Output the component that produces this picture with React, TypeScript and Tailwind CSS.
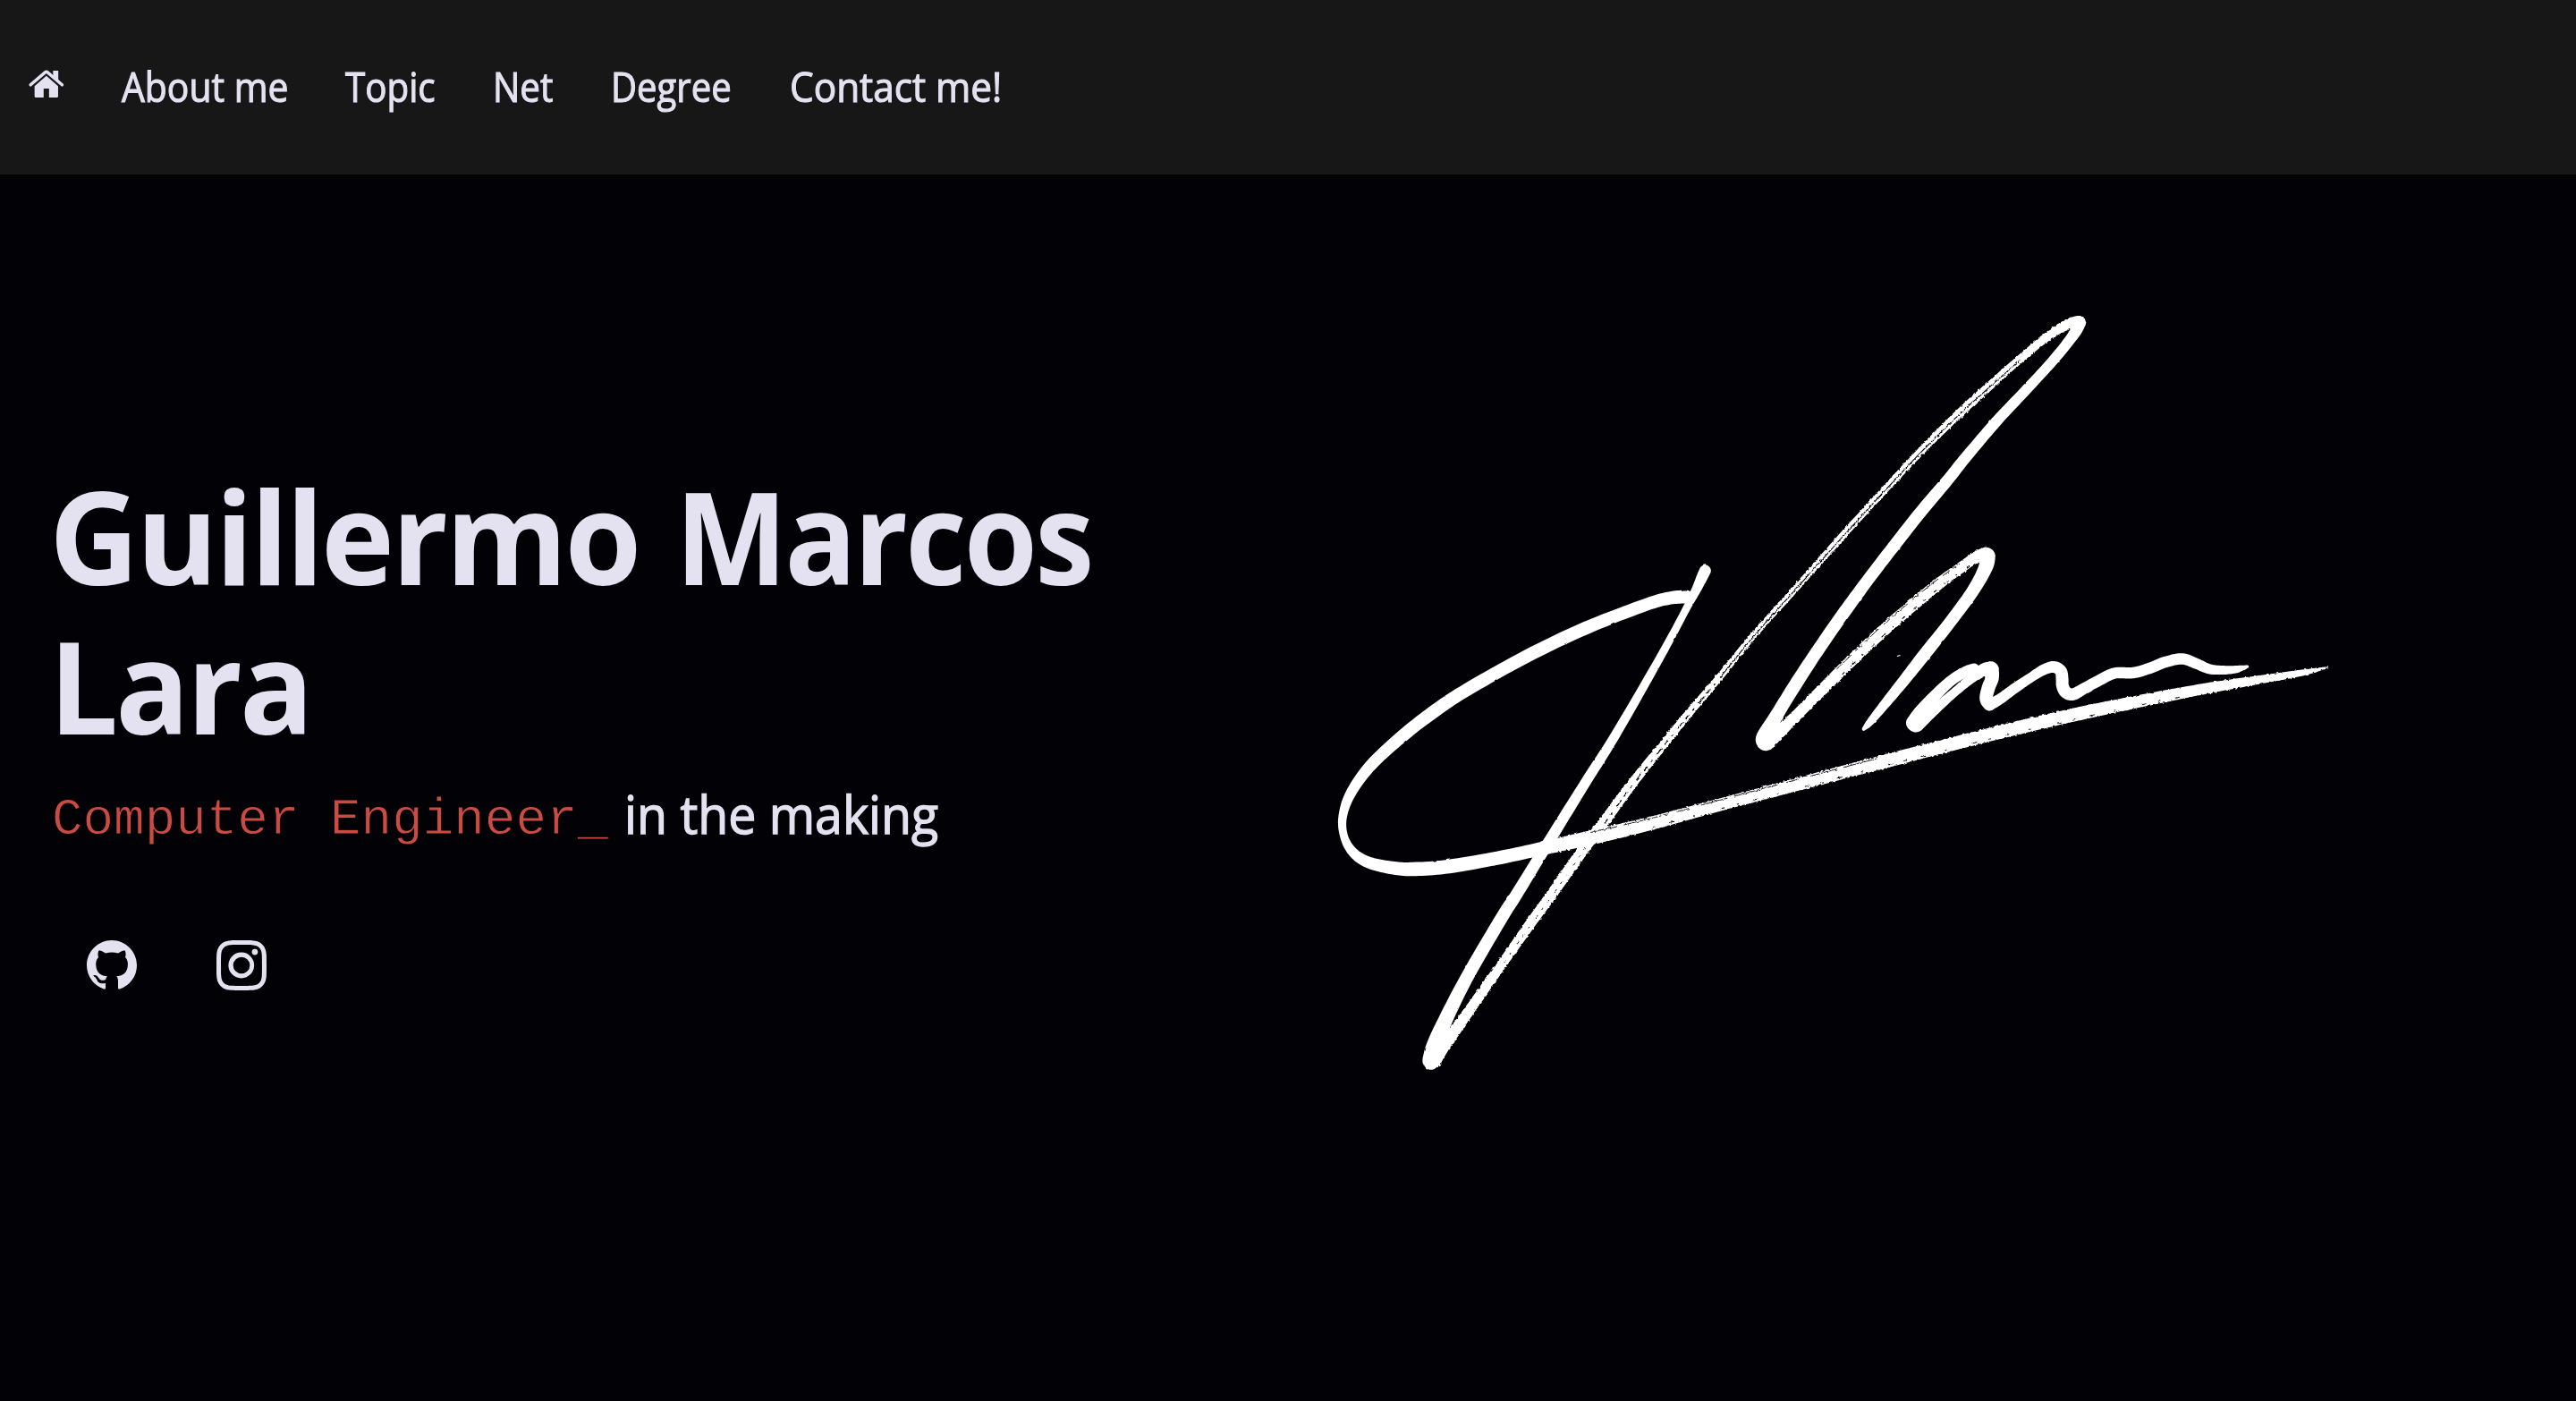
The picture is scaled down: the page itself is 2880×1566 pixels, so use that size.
import React from "react";
import { BsGithub, BsInstagram } from "react-icons/bs";

type Pt = [number, number, number];

// Catmull-Rom interpolation of position and pen width
function smooth(pts: Pt[], steps = 10): Pt[] {
  const out: Pt[] = [];
  for (let i = 0; i < pts.length - 1; i++) {
    const p0 = pts[Math.max(0, i - 1)];
    const p1 = pts[i];
    const p2 = pts[i + 1];
    const p3 = pts[Math.min(pts.length - 1, i + 2)];
    for (let s = 0; s < steps; s++) {
      const t = s / steps;
      const f = (k: 0 | 1 | 2) =>
        0.5 *
        (2 * p1[k] +
          (p2[k] - p0[k]) * t +
          (2 * p0[k] - 5 * p1[k] + 4 * p2[k] - p3[k]) * t * t +
          (3 * p1[k] - p0[k] - 3 * p2[k] + p3[k]) * t * t * t);
      out.push([f(0), f(1), Math.max(0.5, f(2))]);
    }
  }
  out.push(pts[pts.length - 1]);
  return out;
}

function sides(pts: Pt[]) {
  const c = smooth(pts);
  return c.map((p, i) => {
    const a = c[Math.max(0, i - 1)];
    const b = c[Math.min(c.length - 1, i + 1)];
    const len = Math.hypot(b[0] - a[0], b[1] - a[1]) || 1;
    return { x: p[0], y: p[1], w: p[2], nx: -(b[1] - a[1]) / len, ny: (b[0] - a[0]) / len };
  });
}

// A brush stroke of varying width with round ends
function ribbon(pts: Pt[]) {
  const s = sides(pts);
  const l = s.map((p) => `${(p.x + (p.nx * p.w) / 2).toFixed(1)},${(p.y + (p.ny * p.w) / 2).toFixed(1)}`);
  const r = s.map((p) => `${(p.x - (p.nx * p.w) / 2).toFixed(1)},${(p.y - (p.ny * p.w) / 2).toFixed(1)}`).reverse();
  const e = (pts[pts.length - 1][2] / 2).toFixed(1);
  const b = (pts[0][2] / 2).toFixed(1);
  return `M${l.join("L")}A${e},${e} 0 0 0 ${r[0]}L${r.join("L")}A${b},${b} 0 0 0 ${l[0]}Z`;
}

// A hairline that follows a stroke at a fraction of its width
function hair(pts: Pt[], k: number) {
  return "M" + sides(pts).map((p) => `${(p.x + p.nx * p.w * k).toFixed(1)},${(p.y + p.ny * p.w * k).toFixed(1)}`).join("L");
}

const loop: Pt[] = [
  [1885, 667, 15], [1867, 668.5, 14.5], [1840, 676, 14], [1773, 702, 14.5], [1707, 733.5, 14.5], [1640, 771, 14.5],
  [1605, 794, 14.5], [1570, 821, 14], [1533, 855, 13], [1510, 887, 11.5], [1501, 914, 9.5], [1503, 936, 9], [1513, 953, 11],
  [1530, 964, 13], [1556, 970, 14.5], [1580, 971.5, 15.5], [1620, 968.5, 15.5], [1680, 958, 15], [1726, 948, 15],
];
const sweep: Pt[] = [
  [1726, 948, 15], [1780, 936, 16], [1847, 920, 15], [1940, 895, 14], [2100, 853, 15], [2221, 822, 15], [2310, 801, 15],
  [2381, 786, 14], [2453, 772, 12.5], [2506, 763, 10.5], [2574, 752, 7], [2603, 745.7, 1],
];
const down: Pt[] = [
  [1906.5, 637.5, 13], [1903, 645, 12.5], [1896, 660, 10.5], [1885, 681, 8.5], [1857, 733, 9], [1807, 820, 10.5], [1773, 874, 11.5],
  [1734, 937, 12.5], [1696, 999, 13.5], [1680, 1024, 14], [1642, 1089, 14.5], [1617, 1138, 16], [1605, 1167, 19], [1600, 1184, 19], [1600, 1188, 17],
];
const rise: Pt[] = [
  [1602, 1184, 20], [1613, 1168, 17], [1628, 1150, 13], [1650, 1119, 11.5], [1681, 1075, 11], [1712, 1031, 11.5], [1736, 998, 12],
  [1772, 947, 12.5], [1793, 919, 12], [1824, 877, 11], [1855, 838, 10], [1886, 800, 9], [1924, 755, 8], [1959, 712, 7.5],
  [2010, 655, 7.5], [2059, 600, 8], [2102, 553, 8], [2147, 505, 8.5], [2190, 462.5, 9.5], [2217, 438, 9.5], [2257, 402.5, 9],
  [2290, 375.5, 10], [2313, 362, 12], [2324, 360.5, 15],
];
const fall: Pt[] = [
  [2324, 361, 16], [2319, 373, 12.5], [2297, 401, 11.5], [2265, 436, 11.5], [2233, 470, 12], [2198, 511, 12.5], [2178, 536, 13],
  [2146, 574, 13.5], [2113, 616, 13.5], [2087, 650, 13.5], [2060, 687, 14], [2033, 726, 14], [2010, 761, 14.5], [1986, 800, 15], [1974, 823, 20], [1974, 829, 21],
];
const second: Pt[] = [
  [1974, 829, 21], [1989, 818, 15], [2007, 801, 12.5], [2057, 751, 13], [2100, 710, 13.5], [2133, 681, 13.5], [2167, 653, 13],
  [2193, 634, 12], [2210, 622.5, 13], [2220, 620.5, 18],
];
const secondFall: Pt[] = [
  [2221, 622, 20], [2220, 634, 16], [2206, 660, 14], [2179, 697, 13.5], [2152, 731, 14], [2126, 764, 12.5], [2104, 791, 10.5],
  [2090, 808, 8], [2083.5, 815, 4],
];
const letters: Pt[][] = [
  [[2207, 748, 13], [2197, 751, 12], [2181, 761, 12], [2163, 778, 13], [2147, 796, 15], [2140.5, 808, 19]],
  [[2142, 808.5, 20], [2163, 793, 12], [2185, 774, 10], [2203, 759, 11], [2217, 749, 14], [2224, 748, 17]],
  [[2225.5, 748.5, 19], [2227, 758, 15.5], [2223, 769, 15], [2220.5, 781, 14.5], [2224, 787.5, 14]],
  [
    [2224, 787.5, 14], [2235, 782, 12], [2253, 769, 11.5], [2271, 757, 11], [2285, 748.5, 12], [2296, 745.5, 13], [2304, 750, 13.5],
    [2305.5, 759, 14], [2306, 767, 14], [2310, 774, 14], [2318, 776, 13.5], [2331, 769, 12.5], [2346, 761, 12.5], [2364, 752.5, 12.5],
    [2385, 752, 12.5], [2403, 747, 12.5], [2421, 740, 12.5], [2440, 736.5, 12.5], [2456, 742, 12], [2471, 748, 11], [2490, 749, 9.5],
    [2504, 747.5, 7.5], [2513, 745, 3],
  ],
];

function Signature() {
  return (
    <svg viewBox="1490 340 1120 870" className="h-[870px] w-[1120px] shrink-0" aria-label="Signature">
      <defs>
        <filter id="rough" x="-5%" y="-5%" width="110%" height="110%" colorInterpolationFilters="sRGB">
          <feTurbulence type="fractalNoise" baseFrequency="0.3" numOctaves="2" seed="4" />
          <feDisplacementMap in="SourceGraphic" scale="3.2" xChannelSelector="R" yChannelSelector="G" />
        </filter>
        <filter id="edge" x="-5%" y="-5%" width="110%" height="110%" colorInterpolationFilters="sRGB">
          <feTurbulence type="fractalNoise" baseFrequency="0.09" numOctaves="2" seed="7" />
          <feDisplacementMap in="SourceGraphic" scale="1.8" xChannelSelector="R" yChannelSelector="G" />
        </filter>
      </defs>
      <g filter="url(#rough)" fill="#fff">
        <path d={ribbon(rise)} />
        <path d={ribbon(sweep)} />
        <path d={ribbon(second)} />
        <g fill="none" stroke="#020106" strokeLinecap="round">
          <path d={hair(rise.slice(12, 21), 0.1)} strokeWidth="1.1" strokeDasharray="60 2 90 3 40 2" />
          <path d={hair(rise.slice(8, 13), 0.12)} strokeWidth="1.3" strokeDasharray="5 7 2 9 8 6" />
          <path d={hair(rise.slice(4, 8), 0.1)} strokeWidth="0.9" strokeDasharray="2 9 1 13 3 8" />
          <path d={hair(sweep.slice(1, 5), -0.36)} strokeWidth="0.9" strokeDasharray="30 8 50 11 14 14" />
          <path d={hair(sweep.slice(2, 9), 0.32)} strokeWidth="1" strokeDasharray="2 17 5 23 1 31 4 14" />
          <path d={hair(second.slice(3, 8), -0.36)} strokeWidth="0.9" strokeDasharray="22 7 9 5" />
          <path d={hair(second.slice(3, 9), 0.3)} strokeWidth="1.1" strokeDasharray="3 12 5 11 1 14" />
        </g>
      </g>
      <g filter="url(#edge)" fill="#fff">
        <path d={ribbon(loop)} />
        <path d={ribbon(down)} />
        <path d={ribbon(fall)} />
        <path d={ribbon(secondFall)} />
        {letters.map((l, i) => (
          <path key={i} d={ribbon(l)} />
        ))}
        <path d="M2121,733.5l3.5,-1" stroke="#fff" strokeWidth="1.2" />
      </g>
    </svg>
  );
}

function HomeIcon() {
  return (
    <svg viewBox="0 0 41 32" className="h-[32px] w-[41px]" fill="currentColor">
      <path d="M2.3 16.8 18.9 2.5Q20.3 1.3 21.7 2.5L38.3 16.8" fill="none" stroke="currentColor" strokeWidth="3.6" strokeLinecap="round" strokeLinejoin="round" />
      <path d="M28 .6H34V13.5L28 8.2Z" />
      <path d="M20.3 6.4 33.8 18.2V30Q33.8 31.5 32.3 31.5H23.4V21.2H17.2V31.5H8.3Q6.8 31.5 6.8 30V18.2Z" />
    </svg>
  );
}

const links = [
  { label: "About me", box: "w-[186px]", text: "scale-x-[.912]" },
  { label: "Topic", box: "w-[101px]", text: "scale-x-[.9]" },
  { label: "Net", box: "w-[68px]", text: "scale-x-[.9]" },
  { label: "Degree", box: "w-[136px]", text: "scale-x-[.895]" },
  { label: "Contact me!", box: "w-[240px]", text: "scale-x-[.945]" },
];

export default function App() {
  return (
    <div className="flex h-[1566px] w-[2880px] flex-col overflow-hidden bg-[#020106] font-['Trebuchet_MS','Open_Sans',sans-serif] text-[#e4e2f0]">
      <nav className="flex h-[195px] shrink-0 items-center gap-[64px] bg-[#171717] pl-[32px]">
        <a className="flex w-[40px] pb-[8px]">
          <HomeIcon />
        </a>
        {links.map((l) => (
          <a key={l.label} className={`pb-px text-[44.8px] leading-[60px] whitespace-nowrap [-webkit-text-stroke:1.1px_#e4e2f0] ${l.box}`}>
            <span className={`inline-block origin-left ${l.text}`}>{l.label}</span>
          </a>
        ))}
      </nav>
      <main className="flex flex-1">
        <section className="flex w-[1490px] shrink-0 flex-col pt-[320px] pl-[58px]">
          <h1 className="-ml-[3px] text-[144px] leading-[167px] font-bold tracking-[-3px] whitespace-nowrap">
            <span className="flex">
              <span className="w-[700px]">
                <span className="inline-block origin-left scale-x-[.963]">Guillermo</span>
              </span>{" "}
              <span className="inline-block origin-left scale-x-[.922]">Marcos</span>
            </span>
            <span className="block origin-left scale-x-[.948]">Lara</span>
          </h1>
          <p className="mt-[25px] flex h-[72px] items-baseline text-[57.6px] leading-[72px] whitespace-nowrap">
            <span className="w-[640px] font-['Courier','Liberation_Mono',monospace] text-[#c84b44] [-webkit-text-stroke:0.8px_#020106]">
              Computer Engineer_
            </span>
            <span className="origin-left scale-x-[.963] [-webkit-text-stroke:1.3px_#e4e2f0]">in the making</span>
          </p>
          <div className="mt-[105px] flex gap-[89px] pl-[39px] text-[56px]">
            <BsGithub />
            <BsInstagram />
          </div>
        </section>
        <div className="pt-[145px]">
          <Signature />
        </div>
      </main>
    </div>
  );
}
